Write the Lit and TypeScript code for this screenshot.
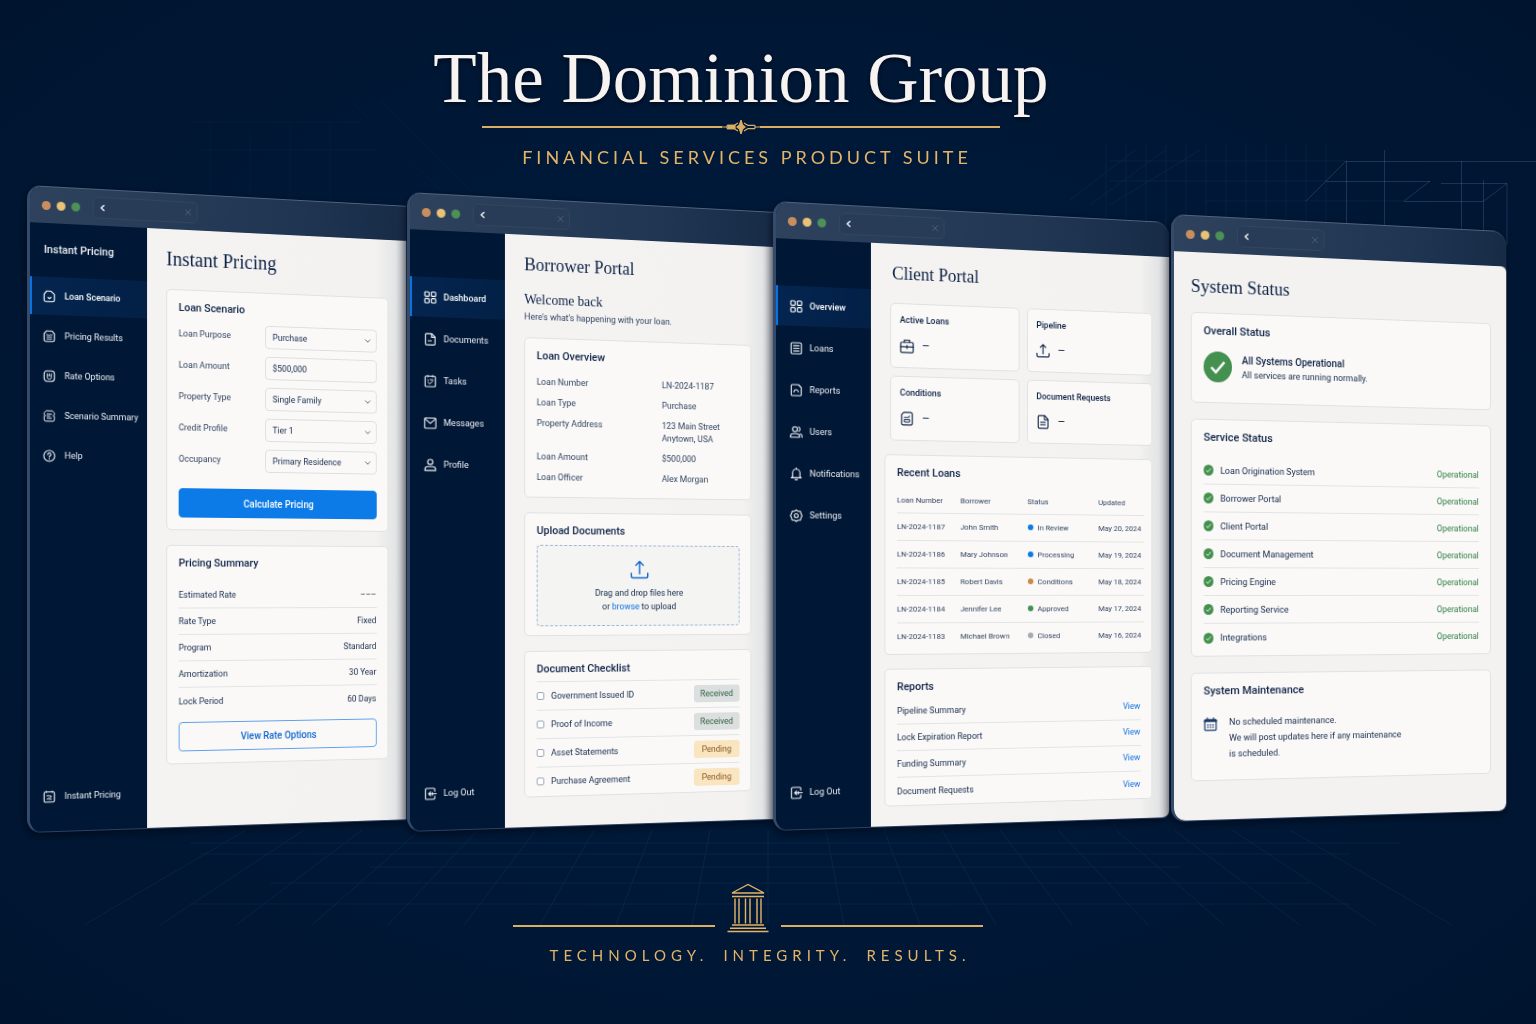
import { LitElement, html, css, svg, nothing, TemplateResult, SVGTemplateResult } from "lit";
import { customElement, property } from "lit/decorators.js";
import { classMap } from "lit/directives/class-map.js";

const ICONS: Record<string, SVGTemplateResult> = {
  scenario: svg`<path d="M4.6 1.6h5.6l4.2 3.8v6.8a2.2 2.2 0 0 1-2.2 2.2H3.8a2.2 2.2 0 0 1-2.2-2.2V5.4z"/><path d="M6.4 9.4 8 10.8l2-1.6"/>`,
  results: svg`<path d="M4.4 1.6h7.2l2.8 3.2v7.4a2.2 2.2 0 0 1-2.2 2.2H3.8a2.2 2.2 0 0 1-2.2-2.2V4.8z"/><path d="M4.6 6.2h2.2l1 1 1.2-1h2.4M5 8.8h6M5 11.4h6" stroke-width="1.1"/>`,
  rate: svg`<rect x="1.6" y="1.6" width="12.8" height="12.8" rx="3.6"/><path d="M5.4 5v4.2a2.6 2.6 0 0 0 5.2 0V5M8 5v2.2M7 7.4h2" stroke-width="1.1"/>`,
  summary: svg`<path d="M1.6 6V4.4l2.4-2.8h8l2.4 2.8V6M1.6 9v3.2a2.2 2.2 0 0 0 2.2 2.2h8.4a2.2 2.2 0 0 0 2.2-2.2V9M1.6 7.5h2M12.4 7.5h2M5.4 5.6h5.2M5.4 8.2h3.4M5.4 10.8h5.2" stroke-width="1.2"/>`,
  help: svg`<circle cx="8" cy="8" r="6.8"/><path d="M6 6.4a2 2 0 1 1 3 1.7c-.7.4-1 .8-1 1.5M8 11.6v.4"/>`,
  pricing: svg`<rect x="1.6" y="1.8" width="12.8" height="12.6" rx="1.8"/><path d="M4.4 1v1.6M11.6 1v1.6M5 6.6h3.4l2.6 1.2-2.6 1.4M5 11l2-1.4M7.4 11h3.2" stroke-width="1.2"/>`,
  grid: svg`<rect x="1.2" y="1.2" width="5.4" height="5.4" rx="1.2"/><rect x="9.4" y="1.2" width="5.4" height="5.4" rx="1.2"/><rect x="1.2" y="9.4" width="5.4" height="5.4" rx="1.2"/><rect x="9.4" y="9.4" width="5.4" height="5.4" rx="1.2"/>`,
  file: svg`<path d="M2 2.4A1.4 1.4 0 0 1 3.4 1H10l4 4v8.6a1.4 1.4 0 0 1-1.4 1.4H3.4A1.4 1.4 0 0 1 2 13.6zM9.6 1.2V5.4H14M5.4 9.8h4"/>`,
  fileLines: svg`<path d="M2.4 2.4A1.4 1.4 0 0 1 3.8 1H10l3.8 4v8.6a1.4 1.4 0 0 1-1.4 1.4H3.8a1.4 1.4 0 0 1-1.4-1.4zM9.6 1.2V5.4h4.2M5.2 8.4h5.4M5.2 11.2h5.4"/>`,
  tasks: svg`<rect x="1.6" y="1.8" width="12.8" height="13" rx="1.4"/><path d="M5 .8v2M11 .8v2M4.8 6.2l1 .9M8 6.2h3.2M4.8 9l2.4 2.4 4-3.6" stroke-width="1.2"/>`,
  mail: svg`<rect x="1" y="1.8" width="14" height="12.6" rx="1.2"/><path d="m1.6 3 6.4 5.4L14.4 3"/>`,
  user: svg`<circle cx="8" cy="4.4" r="3.2"/><path d="M1.4 15v-1.6c0-2 1.6-3.2 3.6-3.2h6c2 0 3.6 1.2 3.6 3.2V15z"/>`,
  logout: svg`<path d="M13.6 5V2.6a1.4 1.4 0 0 0-1.4-1.4H3.4A1.4 1.4 0 0 0 2 2.6v10.8a1.4 1.4 0 0 0 1.4 1.4h8.8a1.4 1.4 0 0 0 1.4-1.4V11M15.6 8H6M8.400 5.800 6 8l2.400 2.200M10.600 6.400v3.200"/>`,
  loans: svg`<rect x="1.6" y="1.2" width="12.8" height="13.6" rx="1.6"/><path d="M4.6 4.8h6.800M4.600 8h6.800M4.600 11.200h6.800"/>`,
  reports: svg`<path d="M1.8 2.6a1.4 1.4 0 0 1 1.4-1.4h7.6l3.4 3.4v8.8a1.4 1.4 0 0 1-1.4 1.4H3.200a1.400 1.400 0 0 1-1.400-1.400zM5 10.400c.4-2 1.600-3 2.800-3 1.600 0 2.400 1.200 2.800 2.600"/>`,
  users: svg`<circle cx="6.400" cy="4.600" r="3"/><path d="M.8 14.400v-1.200c0-1.800 1.400-3 3.200-3h4.800c1.800 0 3.200 1.200 3.200 3v1.200zM11 1.800a3 3 0 0 1 0 5.400M13 10.200c1.400.4 2.200 1.600 2.200 3v1.200"/>`,
  bell: svg`<path d="M3.400 11.600V6.800a4.600 4.600 0 0 1 9.200 0v4.800l1.600 1.200H1.800zM6.600 15.200h2.800M8 .8v1.400"/>`,
  gear: svg`<path d="m8 .8 2 1.600 3.200.2.800 3L15.200 8 14 10.400l-.8 3-3.200.2-2 1.600-2-1.600-3.200-.2-.8-3L.8 8 2 5.600l.8-3L6 2.400z"/><circle cx="8" cy="8" r="2.400"/>`,
  briefcase: svg`<rect x="1" y="4" width="14" height="11" rx="1.200"/><path d="M5 4V1.600h6V4M1 9h14M8 7.400v3.200"/>`,
  upload: svg`<path d="M8 11.400V1.400M4.800 4.400 8 1.200l3.200 3.200M1 11v2.400a1.400 1.400 0 0 0 1.400 1.400h11.200a1.400 1.400 0 0 0 1.400-1.400V11"/>`,
  conditions: svg`<path d="M4.400 1.200h7.800A1.800 1.800 0 0 1 14 3v10a1.800 1.800 0 0 1-1.800 1.800H3.800A1.800 1.800 0 0 1 2 13V3.600z"/><path d="M5 6.600h4.800l1.200-1.600M5 9h6v1.600a1.200 1.200 0 0 1-1.200 1.200H6.200A1.200 1.200 0 0 1 5 10.600z" stroke-width="1.100"/>`,
  calendar: svg`<rect x="1.400" y="2.600" width="13.200" height="12.400" rx="1"/><path d="M1.400 4.200h13.200" stroke-width="2.400"/><path d="M4.400.8v3M11.600.8v3"/><path d="M5 8v4.400M8 8v4.400M11 8v4.400" stroke-dasharray="1.600 1.200" stroke-linecap="butt" stroke-width="1.600"/>`,
  chevron: svg`<path d="m3 5.600 5 5 5-5"/>`,
  back: svg`<path d="M10.600 3 5 8l5.600 5" stroke-width="2.600"/>`,
  close: svg`<path d="m2.600 2.600 10.800 10.800M13.400 2.600 2.600 13.400"/>`,
};

const icon = (name: string, cls = "") => html`<svg class="icon ${cls}" viewBox="0 0 16 16" aria-hidden="true">${ICONS[name]}</svg>`;

const base = css`
  * { box-sizing: border-box; }
  h1, h2, h3, p, ul, dl, dd { margin: 0; padding: 0; }
  ul { list-style: none; }
  a { color: inherit; text-decoration: none; }
  button, input, select { font: inherit; color: inherit; margin: 0; }
  .icon { width: 13px; height: 13px; flex: none; fill: none; stroke: currentColor; stroke-width: 1.4; stroke-linecap: round; stroke-linejoin: round; display: block; }
`;

interface NavItem { icon: string; label: string; }

@customElement("app-window")
export class AppWindow extends LitElement {
  @property({ attribute: false }) nav: NavItem[] = [];
  @property({ attribute: false }) foot?: NavItem;
  @property() label = "";
  @property({ type: Boolean }) wide = false;
  @property({ type: Boolean }) last = false;

  static styles = [base, css`
    :host { display: flex; min-width: 0; }
    .frame {
      flex: none; width: 106%; display: flex; flex-direction: column;
      transform-origin: 0 62%; transform: perspective(900px) rotateY(7deg);
      border-left: 3px solid #344b6b; border-bottom: 1px solid #2a4162; border-top: 1px solid #50627e;
      border-radius: 14px 0 0 14px; background: #001a3b; overflow: hidden;
      box-shadow: -1px 3px 8px rgba(0, 5, 18, 0.7);
    }
    :host([rounded]) .frame { border-radius: 14px 16px 8px 14px; }
    :host([last]) .frame { background: #1d3350; }
    .bar {
      flex: none; height: 36px; display: flex; align-items: center; padding-left: 12px;
      background: linear-gradient(90deg, #2e425d, #1f3551 70%, #172b47);
    }
    .dot { width: 9px; height: 9px; border-radius: 50%; margin-right: 6px; }
    .orange { background: #c98e5e; }
    .yellow { background: #e8c277; }
    .green { background: #4d9159; }
    .tab {
      display: flex; align-items: center; justify-content: space-between; width: 27%; height: 22px; margin-left: 7px;
      padding: 0 5px; border: 1px solid #33465f; border-radius: 5px; background: #283c58;
    }
    :host([wide]) .tab { width: 28%; }
    .tab button { border: 0; background: none; padding: 0; color: #fff; }
    .tab .x { color: #5b6c84; }
    .tab .icon { width: 8px; height: 8px; }
    .main { flex: 1; display: flex; }
    .side { flex: none; width: 97px; display: flex; flex-direction: column; padding: 47px 0 28px; background: #001735; color: #eef1f5; font-size: 9px; }
    .side.wide { width: 120px; padding: 17px 0 26px; }
    .brand { font-size: 11px; line-height: 20px; font-weight: 500; padding: 0 0 17px 14px; }
    .side ul { flex: 1; display: flex; flex-direction: column; gap: 2px; }
    .item { display: flex; align-items: center; gap: 7px; height: 40px; padding-left: 14px; white-space: nowrap; }
    .wide .item { gap: 9px; height: 38px; padding-left: 13px; }
    .side .active { background: linear-gradient(90deg, #042550, #032046); box-shadow: inset 2px 0 0 #0a74e6; font-weight: 500; color: #fff; }
    .side .foot { height: 18px; font-size: 9px; }
    .body { flex: 1; min-width: 0; background: linear-gradient(270deg, #b3b6bd, #e3e4e5 12px, #f3f2f1 34px, #f4f3f2); color: #14284a; }
    :host([last]) .body { background: #f3f2f1; border-radius: 0 6px 8px 12px; }
  `];

  render() {
    return html`<section class="frame" aria-label=${this.label}>
      <div class="bar">
        <span class="dot orange"></span><span class="dot yellow"></span><span class="dot green"></span>
        <div class="tab">
          <button aria-label="Back">${icon("back")}</button>
          <button class="x" aria-label="Close tab">${icon("close")}</button>
        </div>
      </div>
      <div class="main">
        ${this.nav.length ? html`<nav class=${classMap({ side: true, wide: this.wide })}>
          ${this.wide ? html`<div class="brand">Instant Pricing</div>` : nothing}
          <ul>${this.nav.map((n, i) => html`<li><a href="#" class=${classMap({ item: true, active: i === 0 })}>${icon(n.icon)}${n.label}</a></li>`)}</ul>
          ${this.foot ? html`<a href="#" class="item foot">${icon(this.foot.icon)}${this.foot.label}</a>` : nothing}
        </nav>` : nothing}
        <div class="body"><slot></slot></div>
      </div>
    </section>`;
  }
}

const PRICING_NAV = [
  { icon: "scenario", label: "Loan Scenario" }, { icon: "results", label: "Pricing Results" },
  { icon: "rate", label: "Rate Options" }, { icon: "summary", label: "Scenario Summary" }, { icon: "help", label: "Help" },
];
const BORROWER_NAV = [
  { icon: "grid", label: "Dashboard" }, { icon: "file", label: "Documents" }, { icon: "tasks", label: "Tasks" },
  { icon: "mail", label: "Messages" }, { icon: "user", label: "Profile" },
];
const CLIENT_NAV = [
  { icon: "grid", label: "Overview" }, { icon: "loans", label: "Loans" }, { icon: "reports", label: "Reports" },
  { icon: "users", label: "Users" }, { icon: "bell", label: "Notifications" }, { icon: "gear", label: "Settings" },
];
const FIELDS = [
  ["Loan Purpose", "Purchase", "select"], ["Loan Amount", "$500,000", "input"], ["Property Type", "Single Family", "select"],
  ["Credit Profile", "Tier 1", "select"], ["Occupancy", "Primary Residence", "select"],
];
const SUMMARY = [["Estimated Rate", "–––"], ["Rate Type", "Fixed"], ["Program", "Standard"], ["Amortization", "30 Year"], ["Lock Period", "60 Days"]];
const OVERVIEW = [["Loan Number", "LN-2024-1187"], ["Loan Type", "Purchase"], ["Property Address", "123 Main Street\nAnytown, USA"], ["Loan Amount", "$500,000"], ["Loan Officer", "Alex Morgan"]];
const CHECKLIST = [["Government Issued ID", "Received"], ["Proof of Income", "Received"], ["Asset Statements", "Pending"], ["Purchase Agreement", "Pending"]];
const STATS = [["Active Loans", "briefcase"], ["Pipeline", "upload"], ["Conditions", "conditions"], ["Document Requests", "fileLines"]];
const LOANS = [
  ["LN-2024-1187", "John Smith", "In Review", "May 20, 2024", "blue"],
  ["LN-2024-1186", "Mary Johnson", "Processing", "May 19, 2024", "blue"],
  ["LN-2024-1185", "Robert Davis", "Conditions", "May 18, 2024", "amber"],
  ["LN-2024-1184", "Jennifer Lee", "Approved", "May 17, 2024", "green"],
  ["LN-2024-1183", "Michael Brown", "Closed", "May 16, 2024", "gray"],
];
const REPORTS = ["Pipeline Summary", "Lock Expiration Report", "Funding Summary", "Document Requests"];
const SERVICES = ["Loan Origination System", "Borrower Portal", "Client Portal", "Document Management", "Pricing Engine", "Reporting Service", "Integrations"];

@customElement("app-root")
export class AppRoot extends LitElement {
  static styles = [base, css`
    :host { display: block; font-family: Roboto, "Liberation Sans", sans-serif; font-size: 9px; }
    .page {
      position: relative; isolation: isolate; overflow: hidden; min-height: 100vh; display: flex; flex-direction: column;
      background: radial-gradient(ellipse at 50% 50%, #001c3f 0%, #001836 60%, #00142f 100%);
    }
    .mesh { position: absolute; inset: 0; width: 100%; height: 100%; z-index: -1; fill: none; stroke: #5b86b8; stroke-width: 1; }
    .hero { display: flex; flex-direction: column; align-items: center; padding: 36px 54px 0 0; height: 185px; }
    .hero h1 { font: 400 71px/84px "Liberation Serif", serif; color: #f6f3f0; text-shadow: 0 2px 4px #000a1c; white-space: nowrap; }
    .rule { display: grid; grid-template-columns: 1fr auto 1fr; align-items: center; width: 518px; height: 14px; color: #dcae63; }
    .line { height: 2px; background: #dcae63; }
    .gem { width: 38px; height: 14px; display: block; }
    .hero p { margin-top: 11px; padding-left: 12px; font: 400 18px/24px Lato, sans-serif; letter-spacing: 4px; color: #e3b468; }

    .stage { flex: 1; display: grid; grid-template-columns: 380fr 367fr 398fr 334fr; padding: 0 31px 0 27px; }
    .w2 { margin-top: 7px; margin-bottom: 1px; z-index: 1; }
    .w3 { margin-top: 16px; margin-bottom: 2px; z-index: 2; }
    .w4 { margin-top: 29px; margin-bottom: 11px; z-index: 3; }

    .view { display: flex; flex-direction: column; gap: 15px; padding: 14px 20px 6px 20px; }
    .borrower { padding-right: 25px; }
    .client { padding-left: 14px; padding-right: 19px; gap: 14px; }
    .status { padding-left: 17px; padding-right: 17px; gap: 16px; padding-top: 18px; }
    h2 { font: 400 20px/32px "Liberation Serif", serif; color: #0c2144; }
    .borrower h2, .client h2, .status h2 { font-size: 18px; }
    .status h2 { margin-bottom: -6px; }
    .card { border: 1px solid #dfe1e2; border-radius: 5px; background: #faf9f8; padding: 10px 12px 12px; }
    h3 { font-size: 11px; line-height: 16px; font-weight: 500; color: #0c2144; }

    .fields { display: grid; gap: 8px; margin: 7px 0 17px; }
    .field { display: grid; grid-template-columns: 92px minmax(0, 1fr); align-items: center; }
    .field label { color: #31435f; padding-bottom: 2px; }
    .box { display: grid; align-items: center; }
    .box > * { grid-area: 1 / 1; }
    .ctl { width: 100%; height: 24px; padding: 0 7px; border: 1px solid #dcdfe1; border-radius: 4px; background: #faf9f8; appearance: none; color: #14284a; outline: none; }
    .box .icon { justify-self: end; width: 8px; height: 8px; margin-right: 6px; pointer-events: none; }
    .btn { display: block; width: 100%; height: 30px; border: 1px solid #0c7be8; border-radius: 4px; background: #0c7be8; color: #fff; font-size: 10px; font-weight: 500; }
    .ghost { background: #faf9f8; border-color: #5b9fec; color: #0e67d0; margin-top: 8px; }
    .lines { margin-top: 11px; }
    .lines > * { display: flex; align-items: center; justify-content: space-between; height: 27px; border-bottom: 1px solid #e2e3e4; }
    .lines > *:last-child { border-bottom: 0; }

    .hello { margin: -5px 0 -2px; }
    .hello h4 { margin: 0; font: 400 14px/20px "Liberation Serif", serif; color: #0c2144; }
    .hello p { line-height: 15px; color: #31435f; }
    .facts { margin-top: 8px; }
    .facts div { display: grid; grid-template-columns: 133px 1fr; padding: 4px 0; line-height: 13px; color: #31435f; }
    .facts dd { white-space: pre-line; }
    .tight { padding-bottom: 9px; }
    .drop { display: flex; flex-direction: column; align-items: center; padding: 14px 0 12px; margin-top: 6px; border: 1px dashed #9fb3cf; border-radius: 4px; background: #f4f4f3; line-height: 14px; text-align: center; }
    .drop .icon { width: 20px; height: 20px; stroke-width: 1.2; color: #1566cf; margin-bottom: 7px; }
    .link { color: #0f6fe0; }
    .checks { margin-top: 4px; }
    .checks li { display: flex; align-items: center; height: 29px; border-top: 1px solid #e2e3e4; }
    .checks label { display: flex; align-items: center; gap: 7px; flex: 1; }
    .checks input { appearance: none; width: 8px; height: 8px; border: 1px solid #9aa4b2; border-radius: 2px; background: #fff; }
    .badge { width: 50px; line-height: 18px; border-radius: 3px; text-align: center; background: #dbdfdf; color: #2c5f3c; }
    .badge.pending { background: #f9e6c0; color: #8a5420; }
    .flush { padding-bottom: 1px; }

    .client h2 { padding-left: 8px; }
    .stats { display: grid; grid-template-columns: 1fr 1fr; gap: 8px; padding-left: 6px; }
    .stats .card { padding: 8px 9px 14px; }
    .stats h3 { font-size: 9px; }
    .num { display: flex; align-items: center; gap: 8px; margin-top: 10px; line-height: 16px; font-size: 13px; }
    .num .icon { width: 15px; height: 15px; stroke-width: 1.3; }
    .table { padding-bottom: 4px; }
    .wide-table { padding-right: 8px; }
    table { width: 100%; border-collapse: collapse; table-layout: fixed; margin-top: 7px; font-size: 8px; color: #31435f; }
    th, td { text-align: left; font-weight: 400; padding: 0; height: 28px; white-space: nowrap; }
    th { height: 25px; }
    tbody tr { border-top: 1px solid #e2e3e4; }
    .c1 { width: 25%; } .c2 { width: 27%; } .c3 { width: 29%; } .c4 { width: 19%; }
    .pin { display: inline-block; width: 6px; height: 6px; border-radius: 50%; margin-right: 5px; }
    .pin.blue { background: #0d78ea; } .pin.amber { background: #c98a45; } .pin.green { background: #43904f; } .pin.gray { background: #a6aab0; }
    .reports { margin-top: 3px; }
    .reports a { padding-bottom: 2px; }

    .ok { display: flex; align-items: center; gap: 10px; margin: 12px 0 8px; line-height: 15px; }
    .ok strong { font-weight: 500; font-size: 10px; color: #0c2144; display: block; }
    .disc { width: 29px; height: 31px; flex: none; display: block; }
    .mini { width: 10px; height: 11px; margin-right: 7px; }
    .svc { margin-top: 11px; }
    .svc li { height: 28px; }
    .svc span { flex: 1; }
    .svc b { font-weight: 400; font-size: 9px; color: #2f7d43; }
    .note { display: flex; gap: 12px; margin: 15px 0 6px; line-height: 16px; }
    .note .icon { margin-top: 3px; width: 14px; height: 14px; color: #1a3a68; }

    .foot { display: flex; flex-direction: column; align-items: center; height: 191px; padding: 50px 40px 0 0; }
    .seal { display: flex; align-items: flex-end; gap: 12px; }
    .seal .line { width: 202px; margin-bottom: 6px; }
    .temple { width: 42px; height: 50px; display: block; }
    .foot p { display: flex; gap: 15px; margin-top: 10px; padding-left: 24px; font: 400 15px/24px Lato, sans-serif; letter-spacing: 5px; color: #e3b468; }
  `];

  private disc(cls: string): TemplateResult {
    return html`<svg class=${cls} viewBox="0 0 28 31" preserveAspectRatio="none" aria-hidden="true"><ellipse cx="14" cy="15.500" rx="14" ry="15.500" fill="#43904f"/><path d="m7.500 16 4.500 5 8.500-10.500" fill="none" stroke="#fff" stroke-width="2.400"/></svg>`;
  }

  private mesh() {
    const fan = Array.from({ length: 19 }, (_, i) => i - 9);
    const posts = Array.from({ length: 12 }, (_, i) => 1106 + i * 20);
    return html`<svg class="mesh" viewBox="0 0 1536 1024" preserveAspectRatio="xMidYMid slice" aria-hidden="true">
      <g opacity="0.1">
        ${fan.map(i => svg`<path d="M${768 + i * 58} 830 L${768 + i * 76} 925"/>`)}
        <path d="M190 843H1400M200 854H1350M370 867H1180M270 883H1310M190 904H1350"/>
      </g>
      <g opacity="0.1">
        ${posts.map(x => svg`<path d="M${x} 145V225"/>`)}
        <path d="M1110 161H1346M1110 181H1326M1206 201H1404M1070 200 1135 150M1090 205 1165 150M1110 205 1200 150"/>
        <path d="M210 122V190M250 130V195M290 122V198M330 122V200M190 122H360M200 150H380M380 100 470 190M350 100 440 190" opacity="0.5"/>
      </g>
      <path opacity="0.28" d="M1346 161.500H1536M1326 181.500H1430M1346.500 161V228M1384.500 150V230M1461.500 161V235M1441 183.500H1507M1404 201.500H1483L1507 183.500V245M1483.500 180V240M1346 161 1306 201M1430 181 1404 201"/>
    </svg>`;
  }

  render() {
    return html`<div class="page">
      ${this.mesh()}
      <header class="hero">
        <h1>The Dominion Group</h1>
        <div class="rule">
          <span class="line"></span>
          <svg class="gem" viewBox="0 0 38 14" fill="none" stroke="currentColor" stroke-width="1.200" aria-hidden="true">
            <path d="M0 7h5M33 7h5M5 5.400h7l4-2.400M5 8.600h7l4 2.400M33 5.400h-7l-4-2.400M33 8.600h-7l-4 2.400M5 5.400v3.200M33 5.400v3.200"/>
            <path d="M6 5.400h7v3.200H6z" fill="currentColor"/>
            <path d="m19 0 1.500 5 2.500 2-2.500 2-1.500 5-1.500-5L15 7l2.500-2z" fill="currentColor"/>
          </svg>
          <span class="line"></span>
        </div>
        <p>FINANCIAL SERVICES PRODUCT SUITE</p>
      </header>

      <main class="stage">
        <app-window label="Instant Pricing" wide .nav=${PRICING_NAV} .foot=${{ icon: "pricing", label: "Instant Pricing" }}>
          <div class="view">
            <h2>Instant Pricing</h2>
            <form class="card">
              <h3>Loan Scenario</h3>
              <div class="fields">
                ${FIELDS.map(([l, v, kind], i) => html`<div class="field">
                  <label for="f${i}">${l}</label>
                  ${kind === "input"
                    ? html`<input class="ctl" id="f${i}" .value=${v} />`
                    : html`<div class="box"><select class="ctl" id="f${i}"><option>${v}</option></select>${icon("chevron")}</div>`}
                </div>`)}
              </div>
              <button class="btn" type="button">Calculate Pricing</button>
            </form>
            <section class="card">
              <h3>Pricing Summary</h3>
              <ul class="lines">${SUMMARY.map(([a, b]) => html`<li><span>${a}</span><span>${b}</span></li>`)}</ul>
              <button class="btn ghost" type="button">View Rate Options</button>
            </section>
          </div>
        </app-window>

        <app-window class="w2" label="Borrower Portal" .nav=${BORROWER_NAV} .foot=${{ icon: "logout", label: "Log Out" }}>
          <div class="view borrower">
            <h2>Borrower Portal</h2>
            <div class="hello"><h4>Welcome back</h4><p>Here's what's happening with your loan.</p></div>
            <section class="card tight">
              <h3>Loan Overview</h3>
              <dl class="facts">${OVERVIEW.map(([a, b]) => html`<div><dt>${a}</dt><dd>${b}</dd></div>`)}</dl>
            </section>
            <section class="card tight">
              <h3>Upload Documents</h3>
              <div class="drop">${icon("upload")}<span>Drag and drop files here</span><span>or <a class="link" href="#">browse</a> to upload</span></div>
            </section>
            <section class="card flush">
              <h3>Document Checklist</h3>
              <ul class="checks">${CHECKLIST.map(([a, b]) => html`<li><label><input type="checkbox" />${a}</label><span class=${classMap({ badge: true, pending: b === "Pending" })}>${b}</span></li>`)}</ul>
            </section>
          </div>
        </app-window>

        <app-window class="w3" rounded label="Client Portal" .nav=${CLIENT_NAV} .foot=${{ icon: "logout", label: "Log Out" }}>
          <div class="view client">
            <h2>Client Portal</h2>
            <div class="stats">${STATS.map(([a, ic]) => html`<section class="card"><h3>${a}</h3><div class="num">${icon(ic)}<span>–</span></div></section>`)}</div>
            <section class="card table wide-table">
              <h3>Recent Loans</h3>
              <table>
                <thead><tr><th class="c1">Loan Number</th><th class="c2">Borrower</th><th class="c3">Status</th><th class="c4">Updated</th></tr></thead>
                <tbody>${LOANS.map(r => html`<tr><td>${r[0]}</td><td>${r[1]}</td><td><span class="pin ${r[4]}"></span>${r[2]}</td><td>${r[3]}</td></tr>`)}</tbody>
              </table>
            </section>
            <section class="card flush">
              <h3>Reports</h3>
              <ul class="lines reports">${REPORTS.map(r => html`<li><span>${r}</span><a class="link" href="#" aria-label="View ${r}">View</a></li>`)}</ul>
            </section>
          </div>
        </app-window>

        <app-window class="w4" rounded last label="System Status">
          <div class="view status">
            <h2>System Status</h2>
            <section class="card">
              <h3>Overall Status</h3>
              <div class="ok">${this.disc("disc")}<div><strong>All Systems Operational</strong>All services are running normally.</div></div>
            </section>
            <section class="card table">
              <h3>Service Status</h3>
              <ul class="lines svc">${SERVICES.map(s => html`<li>${this.disc("mini")}<span>${s}</span><b>Operational</b></li>`)}</ul>
            </section>
            <section class="card">
              <h3>System Maintenance</h3>
              <div class="note">${icon("calendar")}<p>No scheduled maintenance.<br />We will post updates here if any maintenance<br />is scheduled.</p></div>
            </section>
          </div>
        </app-window>
      </main>

      <footer class="foot">
        <div class="seal">
          <span class="line"></span>
          <svg class="temple" viewBox="0 0 42 50" fill="none" stroke="#e3b468" stroke-width="1.400" aria-hidden="true">
            <path d="M5 10 21 1.500 37 10zM5 13.500h32M8 15.500v25M12 15.500v25M18.500 15.500v25M23 15.500v25M30 15.500v25M34 15.500v25M5 42h32M3 45.200h36M.5 48.500h41"/>
          </svg>
          <span class="line"></span>
        </div>
        <p><span>TECHNOLOGY.</span><span>INTEGRITY.</span><span>RESULTS.</span></p>
      </footer>
    </div>`;
  }
}
